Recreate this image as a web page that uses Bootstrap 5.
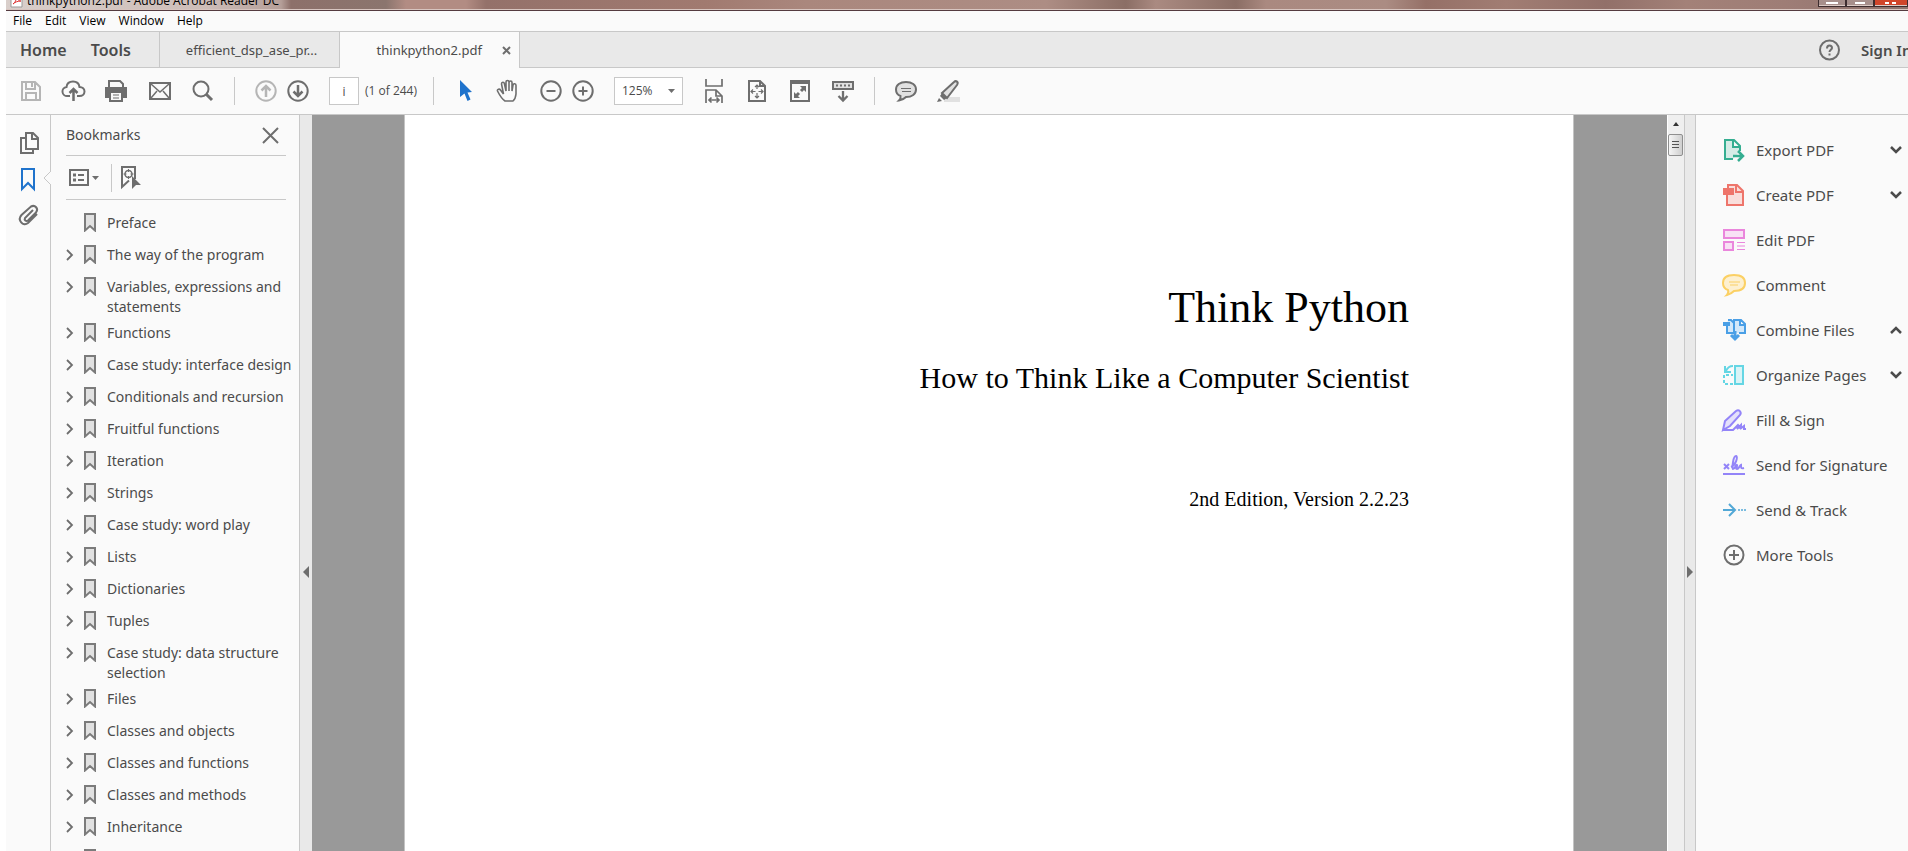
<!DOCTYPE html>
<html lang="en">
<head>
<meta charset="utf-8">
<meta name="viewport" content="width=device-width, initial-scale=1">
<title>thinkpython2.pdf - Adobe Acrobat Reader DC</title>
<link href="https://cdn.jsdelivr.net/npm/bootstrap@5.3.0/dist/css/bootstrap.min.css" rel="stylesheet">
<style>
:root{--line:#c8c8c8;--face:#fafafa;--strip:#e9e9e9;--ink:#4b4b4b;--icon:#6e6e6e}
body{font-family:"Noto Sans","Open Sans",sans-serif;font-size:14px;line-height:20px;color:var(--ink);background:#fff;padding-left:6px}
button,.plain-link{border:0;padding:0;background:none;color:inherit;text-decoration:none;font:inherit}
svg{display:block;flex:none;fill:none;stroke:var(--icon);stroke-width:2;overflow:visible}
.app{background:var(--face)}
.titlebar{height:11px;border-bottom:1px solid #543b40;box-shadow:inset 0 -1px #d8c5c0;font:12px/14px "Open Sans",sans-serif;color:#000;
background:linear-gradient(90deg,#d9cfcb 0,#cdbdb8 200px,#b59f99 275px,#8d706a 285px,#8b756e 380px,#b28c83 400px,#b28c83 460px,#94716a 480px,#a17a70 700px,#aa877d 800px,#ad8d84 1040px,#8b6e65 1120px,#aa8a81 1150px,#8b6e65 1230px,#aa8980 1260px,#ab8c83 1380px,#957067 1420px,#a17d73 1500px,#927069 1600px,#a38178 1680px,#9e7d76 1780px,#8e736d)}
.window-title{padding:0 0 2px 4px}
.caption-btns button{width:28px;height:7px;border:1px solid #3e2d2f;border-top:0;background:#a78f8b;box-shadow:inset 0 -1px #dbc9c4}
.caption-btns .x-btn{background:#d0452a;width:34px}
.menubar{height:21px;border-bottom:1px solid var(--line);font:12px/20px "Open Sans",sans-serif;color:#000;padding-left:7px;gap:13px}
.tabbar{height:36px;background:var(--strip);border-bottom:1px solid var(--line)}
.main-nav{width:153px;padding-left:14px;gap:24px}
.main-tab{font-size:16px;font-weight:600}
.doc-tab{width:180px;height:36px;border-left:1px solid var(--line);font-size:13px}
.doc-tab.current{background:var(--face);border-right:1px solid var(--line);width:181px;gap:21px;padding-right:9px}
.account{width:90px;font-size:15px;font-weight:600}
.toolbar{height:47px;border-bottom:1px solid var(--line);font:12px/20px "Open Sans",sans-serif;padding-left:14px}
.toolbar .sep,.marks-tools .sep{width:1px;height:28px;background:var(--line)}
.page-no,.zoom-box{height:28px;border:1px solid var(--line);border-radius:0;background-color:#fff;color:var(--ink);font-size:12px}
.page-no{width:30px}
.zoom-box{width:69px;padding:0 7px;appearance:none}
.rail{width:45px;border-right:1px solid var(--line);padding:17px 0 0 13px;gap:14px}
.notch{right:-1px;top:56px}
.marks{width:249px;border-right:1px solid var(--line)}
.marks-head{height:41px;margin:0 13px 0 15px;border-bottom:1px solid var(--line)}
.marks-tools{height:44px;margin:0 13px 0 15px;border-bottom:1px solid var(--line)}
.marks-list{padding:7px 0 0 15px;margin:0}
.marks-list li{min-height:32px;padding-top:6px}
.marks-list .tw{width:18px;height:20px}
.marks-list .ribbon{width:23px;height:20px}
.marks-list a{width:185px}
.splitter{width:12px;background:var(--strip)}
.splitter.edged{border:solid var(--line);border-width:0 1px}
.stage{background:#999;padding:0 93px 0 92px}
.sheet{border:solid #c4c4c4;border-width:0 1px;font-family:"Palatino Linotype",Palatino,"Liberation Serif",serif;color:#000;padding:163px 164px 0 0;text-align:right}
.sheet h1{font-size:44px;line-height:60px;margin:0 0 20px;font-weight:400}
.sheet h2{font-size:30px;line-height:40px;margin:0 0 86px;font-weight:400}
.sheet p{font-size:20px;line-height:30px;margin:0}
.vscroll{width:17px;background:#efefef;border-left:1px solid #fff}
.thumb{width:15px;height:22px;border:1px solid #8f8f8f;border-radius:2px;background:linear-gradient(90deg,#f5f5f5,#cfcfcf)}
.tools{width:212px;padding:12px 6px 0 25px;font-size:15px}
.tools button{height:45px;gap:9px;width:100%;text-align:left}
.tools .pic{width:26px}
.tools .arr{margin-left:auto;stroke:#4b4b4b;stroke-width:2.5}
</style>
</head>
<body class="vh-100 overflow-hidden">
<svg width="0" height="0" class="position-absolute" aria-hidden="true">
<symbol id="chev" viewBox="0 0 8 12"><path d="M1 1l5 5-5 5" stroke-width="1.800"/></symbol>
<symbol id="ribbon" viewBox="0 0 12 19"><path d="M1 1h10v16.500l-5-4.500-5 4.500z" fill="#e1e1e1" stroke="#7b7b7b"/></symbol>
</svg>
<div class="app h-100 d-flex flex-column overflow-hidden">
<header class="titlebar d-flex justify-content-between flex-shrink-0 overflow-hidden">
 <div class="window-title d-flex align-items-end gap-1">
  <svg width="13" height="17" viewBox="0 0 13 17" style="stroke-width:1"><path d="M1 0h11v16H1z" fill="#fff" stroke="#999"/><path d="M3 13c3-2 4-6 3-9 1 5 3 6 5 6-3 0-6 1-8 3" stroke="#d33"/></svg>
  <span class="text-nowrap">thinkpython2.pdf - Adobe Acrobat Reader DC</span>
 </div>
 <div class="caption-btns d-flex align-items-start">
  <button aria-label="Minimize"><svg class="mx-auto" width="12" height="3"><path d="M0 1h12" stroke="#fff"/></svg></button>
  <button aria-label="Restore"><svg class="mx-auto" width="10" height="3"><path d="M0 1h10" stroke="#fff"/></svg></button>
  <button class="x-btn" aria-label="Close window"><svg class="mx-auto" width="12" height="3"><path d="M0 1h4m3 0h4" stroke="#fff"/></svg></button>
 </div>
</header>
<nav class="menubar d-flex flex-shrink-0" aria-label="Menu">
 <button>File</button><button>Edit</button><button>View</button><button>Window</button><button>Help</button>
</nav>
<div class="tabbar d-flex flex-shrink-0">
 <nav class="main-nav d-flex align-items-center"><button class="main-tab">Home</button><button class="main-tab">Tools</button></nav>
 <button class="doc-tab ps-2 pe-1">efficient_dsp_ase_pr...</button>
 <div class="doc-tab current d-flex align-items-center justify-content-end">
  <button>thinkpython2.pdf</button>
  <button aria-label="Close tab"><svg width="7" height="7"><path d="M0 0l7 7M7 0l-7 7"/></svg></button>
 </div>
 <div class="account d-flex align-items-center ms-auto gap-3 text-nowrap overflow-hidden">
  <button aria-label="Help"><svg width="23" height="22" viewBox="0 0 23 22"><circle cx="11.500" cy="11" r="9.500"/><path d="M9 9.500q0-3 2.500-3t2.500 2.500c0 1.500-2.500 2-2.500 4M11.500 14.500v2"/></svg></button>
  <button class="ps-1">Sign In</button>
 </div>
</div>
<div class="toolbar d-flex align-items-center flex-shrink-0" role="toolbar">
 <button aria-label="Save"><svg width="22" height="22" style="stroke:#b5b5b5"><path d="M2 2h13l5 5v13H2zM6 2v7h9V2M12 3v4M6 20v-7h10v7"/></svg></button>
 <button aria-label="Upload" style="margin-left:20px"><svg width="24" height="22"><path d="M8 16H5.500a4.500 4.500 0 0 1-1-9C5 3 8 1.500 11 1.500c3.500 0 6 2 6.500 5.500 3 0 5 2 5 4.500s-2 4.500-5 4.500H15"/><path d="M11.500 21V9M7.500 13l4-4 4 4" stroke-width="2.500"/></svg></button>
 <button aria-label="Print" style="margin-left:19px"><svg width="22" height="22"><path d="M4 7V1h11l3 3v3" /><path d="M1 8h20v9H1z" fill="#6e6e6e"/><path d="M5 12h12v9H5z" fill="#fafafa"/><path d="M8 15h6M8 18h6" stroke-width="1"/></svg></button>
 <button aria-label="Email" style="margin-left:22px"><svg width="22" height="18"><path d="M1 1h20v16H1z"/><path d="M2 2l9 8 9-8M2 16l6-7M20 16l-6-7" stroke-width="1.500"/></svg></button>
 <button aria-label="Search" style="margin-left:21px"><svg width="22" height="22"><circle cx="9" cy="9" r="7.500"/><path d="M14 14l6 6" stroke-width="3"/></svg></button>
 <span class="sep" style="margin-left:20px"></span>
 <button aria-label="Previous page" style="margin-left:20px"><svg width="22" height="22" style="stroke:#b5b5b5"><circle cx="11" cy="11" r="9.700"/><path d="M11 17V6M6.500 10.500L11 6l4.500 4.500" stroke-width="2.500"/></svg></button>
 <button aria-label="Next page" style="margin-left:10px"><svg width="22" height="22"><circle cx="11" cy="11" r="9.700"/><path d="M11 5v11M6.500 11.500L11 16l4.500-4.500" stroke-width="2.500"/></svg></button>
 <input class="page-no text-center p-0" aria-label="Page number" value="i" style="margin-left:20px">
 <span class="text-nowrap" style="margin-left:6px;width:68px">(1 of 244)</span>
 <span class="sep"></span>
 <button aria-label="Select" style="margin-left:26px"><svg width="13" height="22"><path d="M0 0l12 12-4.500.5 3 7-3 1.500-3-7.500L0 17z" fill="#1f73cc" stroke="none"/></svg></button>
 <button aria-label="Hand" style="margin-left:23px"><svg width="24" height="24" style="stroke-width:1.600"><path d="M9 22C6 20 3 15 1.500 12c-.5-2 2-2.500 3-1l3 4L5.500 5c0-2 2.500-2.500 3 0l1.500 7V3c0-2 3-2 3 0v9V3.500c.500-2 3-2 3 0V12l1-6c.5-2 3-1.500 3 .5v8.500q-.5 5-3 7z"/></svg></button>
 <button aria-label="Zoom out" style="margin-left:20px"><svg width="22" height="22"><circle cx="11" cy="11" r="9.700"/><path d="M6.500 11h9"/></svg></button>
 <button aria-label="Zoom in" style="margin-left:10px"><svg width="22" height="22"><circle cx="11" cy="11" r="9.700"/><path d="M6.500 11h9M11 6.500v9"/></svg></button>
 <label class="position-relative" style="margin-left:20px"><select class="zoom-box" aria-label="Zoom level"><option>125%</option></select><svg class="position-absolute top-50 end-0 me-2 translate-middle-y" width="7" height="4"><path d="M0 0h7l-3.500 4z" fill="#6e6e6e" stroke="none"/></svg></label>
 <button aria-label="Fit width" style="margin-left:22px"><svg width="18" height="24"><path d="M1 0v7h16V0M1 24V11h10l6 6v7M11 11v6h6M4 21h10M6.500 18.500L4 21l2.500 2.500M11.500 18.500L14 21l-2.500 2.500" stroke-width="1.700"/></svg></button>
 <button aria-label="Fit page" style="margin-left:25px"><svg width="18" height="22"><path d="M1 1h11l5 5v15H1zM12 1v5h5"/><path d="M9 5v4M9 13v5M3.500 11.500h4M10.500 11.500h4M7 7l2-2 2 2M7 16l2 2 2-2M5 9.500l-2 2 2 2M13 9.500l2 2-2 2" stroke-width="1.200"/></svg></button>
 <button aria-label="Full screen" style="margin-left:24px"><svg width="20" height="22"><path d="M1 1h18v20H1zM1 3h18"/><path d="M11 11l4-4M9 13l-4 4" stroke-width="3"/><path d="M10 6h6v6zM4 12v6h6z" fill="#6e6e6e" stroke="none"/></svg></button>
 <button aria-label="Keyboard shortcuts" style="margin-left:22px"><svg width="22" height="22"><path d="M1 2h20v7H1z" fill="#e1e1e1"/><path d="M4 5.500h14" stroke-dasharray="2 2"/><path d="M11 11v9M6.500 16l4.500 4.500 4.500-4.500" stroke-width="2.300"/></svg></button>
 <span class="sep" style="margin-left:20px"></span>
 <button aria-label="Comment" style="margin-left:20px"><svg width="22" height="22"><path d="M11 2c6 0 10 3 10 7.500S17 17 11 17q-3 3-7 3.500 2-2 1.500-4.500C2.500 15 1 12.500 1 9.500 1 5 5 2 11 2z" fill="#e1e1e1"/><path d="M6 8.500h10M7 11.500h9" stroke-width="1"/></svg></button>
 <button aria-label="Highlight" style="margin-left:20px"><svg width="23" height="22"><path d="M7 17h16v5H7z" fill="#e1e1e1" stroke="none"/><path d="M5 13L17 2c2-2 5 0 3 3L10 18z" fill="#e1e1e1"/><path d="M5 13l5 5-3 2-4-4zM2 18l3 3-5 1z" fill="#6e6e6e" stroke="none"/></svg></button>
</div>
<div class="d-flex flex-grow-1 overflow-hidden">
 <nav class="rail position-relative flex-shrink-0 d-flex flex-column align-items-start" aria-label="Panels">
  <button aria-label="Page thumbnails"><svg width="20" height="22"><path d="M6 6H2v15h12v-4"/><path d="M7 1h7l5 5v11H7zM13 1v6h6"/></svg></button>
  <button aria-label="Bookmarks panel"><svg width="18" height="22" style="stroke:#1f73cc"><path d="M3 1h12v20l-6-6-6 6z"/></svg></button>
  <button aria-label="Attachments"><svg width="20" height="22"><path d="M14 6l-8 8c-1 2 1 4 3 2.500l8-8c3-4-1-8-5-6L2.500 11C-2 16 4 23 9 19l9-9"/></svg></button>
  <svg class="notch position-absolute" width="8" height="14" style="stroke:#c8c8c8;stroke-width:1"><path d="M8 0L1 7l7 7z" fill="#fafafa" stroke="none"/><path d="M8 0L1 7l7 7"/></svg>
 </nav>
 <aside class="marks flex-shrink-0">
  <div class="marks-head d-flex align-items-center justify-content-between"><span>Bookmarks</span><button aria-label="Close panel" class="me-2"><svg width="15" height="15"><path d="M0 0l15 15M15 0L0 15"/></svg></button></div>
  <div class="marks-tools d-flex align-items-center gap-2">
   <button class="d-flex align-items-center" aria-label="Options" style="gap:3px;margin-left:3px"><svg width="20" height="17"><path d="M1 1h18v15H1zM9 6h6M9 11h6"/><path d="M4 6h3M4 11h3" stroke-width="3"/></svg><svg width="7" height="4"><path d="M0 0h7l-3.500 4z" fill="#6e6e6e" stroke="none"/></svg></button>
   <span class="sep ms-1"></span>
   <button aria-label="Find current bookmark"><svg width="20" height="23"><path d="M9 14.500L2 21V1h13v12"/><circle cx="8.500" cy="8" r="3.500" stroke-width="1.500"/><path d="M8.500 3v3M8.500 10v3M3.500 8h3M10.500 8h3" stroke-width="1"/><path d="M12 10l9 9h-5l-4 4z" fill="#6e6e6e" stroke="none"/></svg></button>
  </div>
  <ul class="marks-list list-unstyled">
   <li class="d-flex"><span class="tw"></span><span class="ribbon"><svg width="12" height="19"><use href="#ribbon"/></svg></span><a class="plain-link" href="#">Preface</a></li>
   <li class="d-flex"><button class="tw" aria-label="Expand"><svg width="8" height="12"><use href="#chev"/></svg></button><span class="ribbon"><svg width="12" height="19"><use href="#ribbon"/></svg></span><a class="plain-link" href="#">The way of the program</a></li>
   <li class="d-flex"><button class="tw" aria-label="Expand"><svg width="8" height="12"><use href="#chev"/></svg></button><span class="ribbon"><svg width="12" height="19"><use href="#ribbon"/></svg></span><a class="plain-link" href="#">Variables, expressions and statements</a></li>
   <li class="d-flex"><button class="tw" aria-label="Expand"><svg width="8" height="12"><use href="#chev"/></svg></button><span class="ribbon"><svg width="12" height="19"><use href="#ribbon"/></svg></span><a class="plain-link" href="#">Functions</a></li>
   <li class="d-flex"><button class="tw" aria-label="Expand"><svg width="8" height="12"><use href="#chev"/></svg></button><span class="ribbon"><svg width="12" height="19"><use href="#ribbon"/></svg></span><a class="plain-link text-nowrap" href="#">Case study: interface design</a></li>
   <li class="d-flex"><button class="tw" aria-label="Expand"><svg width="8" height="12"><use href="#chev"/></svg></button><span class="ribbon"><svg width="12" height="19"><use href="#ribbon"/></svg></span><a class="plain-link text-nowrap" href="#">Conditionals and recursion</a></li>
   <li class="d-flex"><button class="tw" aria-label="Expand"><svg width="8" height="12"><use href="#chev"/></svg></button><span class="ribbon"><svg width="12" height="19"><use href="#ribbon"/></svg></span><a class="plain-link" href="#">Fruitful functions</a></li>
   <li class="d-flex"><button class="tw" aria-label="Expand"><svg width="8" height="12"><use href="#chev"/></svg></button><span class="ribbon"><svg width="12" height="19"><use href="#ribbon"/></svg></span><a class="plain-link" href="#">Iteration</a></li>
   <li class="d-flex"><button class="tw" aria-label="Expand"><svg width="8" height="12"><use href="#chev"/></svg></button><span class="ribbon"><svg width="12" height="19"><use href="#ribbon"/></svg></span><a class="plain-link" href="#">Strings</a></li>
   <li class="d-flex"><button class="tw" aria-label="Expand"><svg width="8" height="12"><use href="#chev"/></svg></button><span class="ribbon"><svg width="12" height="19"><use href="#ribbon"/></svg></span><a class="plain-link" href="#">Case study: word play</a></li>
   <li class="d-flex"><button class="tw" aria-label="Expand"><svg width="8" height="12"><use href="#chev"/></svg></button><span class="ribbon"><svg width="12" height="19"><use href="#ribbon"/></svg></span><a class="plain-link" href="#">Lists</a></li>
   <li class="d-flex"><button class="tw" aria-label="Expand"><svg width="8" height="12"><use href="#chev"/></svg></button><span class="ribbon"><svg width="12" height="19"><use href="#ribbon"/></svg></span><a class="plain-link" href="#">Dictionaries</a></li>
   <li class="d-flex"><button class="tw" aria-label="Expand"><svg width="8" height="12"><use href="#chev"/></svg></button><span class="ribbon"><svg width="12" height="19"><use href="#ribbon"/></svg></span><a class="plain-link" href="#">Tuples</a></li>
   <li class="d-flex"><button class="tw" aria-label="Expand"><svg width="8" height="12"><use href="#chev"/></svg></button><span class="ribbon"><svg width="12" height="19"><use href="#ribbon"/></svg></span><a class="plain-link" href="#">Case study: data structure selection</a></li>
   <li class="d-flex"><button class="tw" aria-label="Expand"><svg width="8" height="12"><use href="#chev"/></svg></button><span class="ribbon"><svg width="12" height="19"><use href="#ribbon"/></svg></span><a class="plain-link" href="#">Files</a></li>
   <li class="d-flex"><button class="tw" aria-label="Expand"><svg width="8" height="12"><use href="#chev"/></svg></button><span class="ribbon"><svg width="12" height="19"><use href="#ribbon"/></svg></span><a class="plain-link" href="#">Classes and objects</a></li>
   <li class="d-flex"><button class="tw" aria-label="Expand"><svg width="8" height="12"><use href="#chev"/></svg></button><span class="ribbon"><svg width="12" height="19"><use href="#ribbon"/></svg></span><a class="plain-link" href="#">Classes and functions</a></li>
   <li class="d-flex"><button class="tw" aria-label="Expand"><svg width="8" height="12"><use href="#chev"/></svg></button><span class="ribbon"><svg width="12" height="19"><use href="#ribbon"/></svg></span><a class="plain-link" href="#">Classes and methods</a></li>
   <li class="d-flex"><button class="tw" aria-label="Expand"><svg width="8" height="12"><use href="#chev"/></svg></button><span class="ribbon"><svg width="12" height="19"><use href="#ribbon"/></svg></span><a class="plain-link" href="#">Inheritance</a></li>
   <li class="d-flex"><span class="tw"></span><span class="ribbon"><svg width="12" height="19"><use href="#ribbon"/></svg></span></li>
  </ul>
 </aside>
 <button class="splitter flex-shrink-0" aria-label="Hide bookmarks" style="padding:178px 0 0 3px"><svg width="7" height="12"><path d="M6 0v12L0 6z" fill="#6e6e6e" stroke="none"/></svg></button>
 <main class="stage flex-grow-1"><article class="sheet bg-white h-100"><h1>Think Python</h1><h2>How to Think Like a Computer Scientist</h2><p>2nd Edition, Version 2.2.23</p></article></main>
 <div class="vscroll flex-shrink-0" aria-hidden="true"><svg class="mx-auto" width="8" height="19"><path d="M1 11h6L4 7z" fill="#333" stroke="none"/></svg><div class="thumb"><svg class="mx-auto" width="7" height="20"><path d="M0 6.500h7M0 9.500h7M0 12.500h7" stroke="#555" stroke-width="1"/></svg></div></div>
 <button class="splitter edged flex-shrink-0" aria-label="Hide tools" style="padding:178px 0 0 2px"><svg width="7" height="12"><path d="M0 0v12l6-6z" fill="#6e6e6e" stroke="none"/></svg></button>
 <aside class="tools flex-shrink-0">
  <button class="d-flex align-items-center"><svg class="pic" width="26" height="22" style="stroke:#35ae91"><path d="M12 20H4V1h9l6 6v5M12 1v7h7" fill="#d5ece6"/><path d="M12 17h9M17 12l5 5-5 5" stroke-width="2.500"/></svg>Export PDF<svg class="arr" width="12" height="8"><path d="M1 1l5 5 5-5"/></svg></button>
  <button class="d-flex align-items-center"><svg class="pic" width="26" height="22" style="stroke:#ee756b"><path d="M6 8v13h16V7l-6-6H7v4M15 1v7h7" fill="#f9dedb"/><path d="M3 5h9v5H3z" fill="#ee756b"/></svg>Create PDF<svg class="arr" width="12" height="8"><path d="M1 1l5 5 5-5"/></svg></button>
  <button class="d-flex align-items-center"><svg class="pic" width="26" height="22" style="stroke:#ea86dc"><path d="M3 1h20v8H3zM3 13h9v8H3z" fill="#f8e1f5"/><path d="M16 13.500h8M16 17h8M16 20.500h8" stroke-width="1"/></svg>Edit PDF</button>
  <button class="d-flex align-items-center"><svg class="pic" width="26" height="22" style="stroke:#fbd064"><path d="M13 1c7 0 11 3 11 8s-4 8-11 8q-3 3-7 4 2-2 1-5C4 15 2 12 2 9c0-5 4-8 11-8z" fill="#fdf0d0"/><path d="M8 8h11M9 11h8" stroke-width="1"/></svg>Comment</button>
  <button class="d-flex align-items-center"><svg class="pic" width="26" height="22" style="stroke:#4a9fe6"><path d="M6 6v8h7V4l-3-3H7M13 14V1h7l4 4v9h-6M19 1v5h5" fill="#d3e8fa"/><path d="M2 3h7v4H2z" fill="#4a9fe6" stroke="none"/><path d="M14 12v7M10 16l4 4 4-4" stroke-width="3"/></svg>Combine Files<svg class="arr" width="12" height="8"><path d="M1 7l5-5 5 5"/></svg></button>
  <button class="d-flex align-items-center"><svg class="pic" width="26" height="22" style="stroke:#65d6e4"><path d="M14 2h8v18h-8z" fill="#daf4f7"/><path d="M12 20H3V11h9" stroke-dasharray="3 2"/><path d="M12 2q-5 0-7 5M4 2v6h6"/></svg>Organize Pages<svg class="arr" width="12" height="8"><path d="M1 1l5 5 5-5"/></svg></button>
  <button class="d-flex align-items-center"><svg class="pic" width="26" height="22" style="stroke:#9384f8"><path d="M2 21l2-9L15 2c3-2 6 1 4 4L9 17z" fill="#e4e0fb"/><path d="M2 21h10l5-5q1 1-1 4l4-4q0 2-1 4l4-3v3h2"/></svg>Fill &amp; Sign</button>
  <button class="d-flex align-items-center"><svg class="pic" width="26" height="22" style="stroke:#9384f8"><path d="M2 20h22M3 10l5 5M8 10l-5 5M10 13c5-2 7-10 5-11-3 0-4 12-3 13 2 0 3-5 4-4s-2 4 0 4 2-3 4-4c0 3 0 4 3 3"/></svg>Send for Signature</button>
  <button class="d-flex align-items-center"><svg class="pic" width="26" height="22" style="stroke:#52a8d6"><path d="M2 11h11M8 5l6 6-6 6"/><path d="M17 11h9" stroke-dasharray="2 1" stroke-width="1.500"/></svg>Send &amp; Track</button>
  <button class="d-flex align-items-center"><svg class="pic" width="26" height="22"><circle cx="13" cy="11" r="9.500"/><path d="M8 11h10M13 6v10"/></svg>More Tools</button>
 </aside>
</div>
</div>
<script src="https://cdn.jsdelivr.net/npm/bootstrap@5.3.0/dist/js/bootstrap.bundle.min.js"></script>
</body>
</html>
